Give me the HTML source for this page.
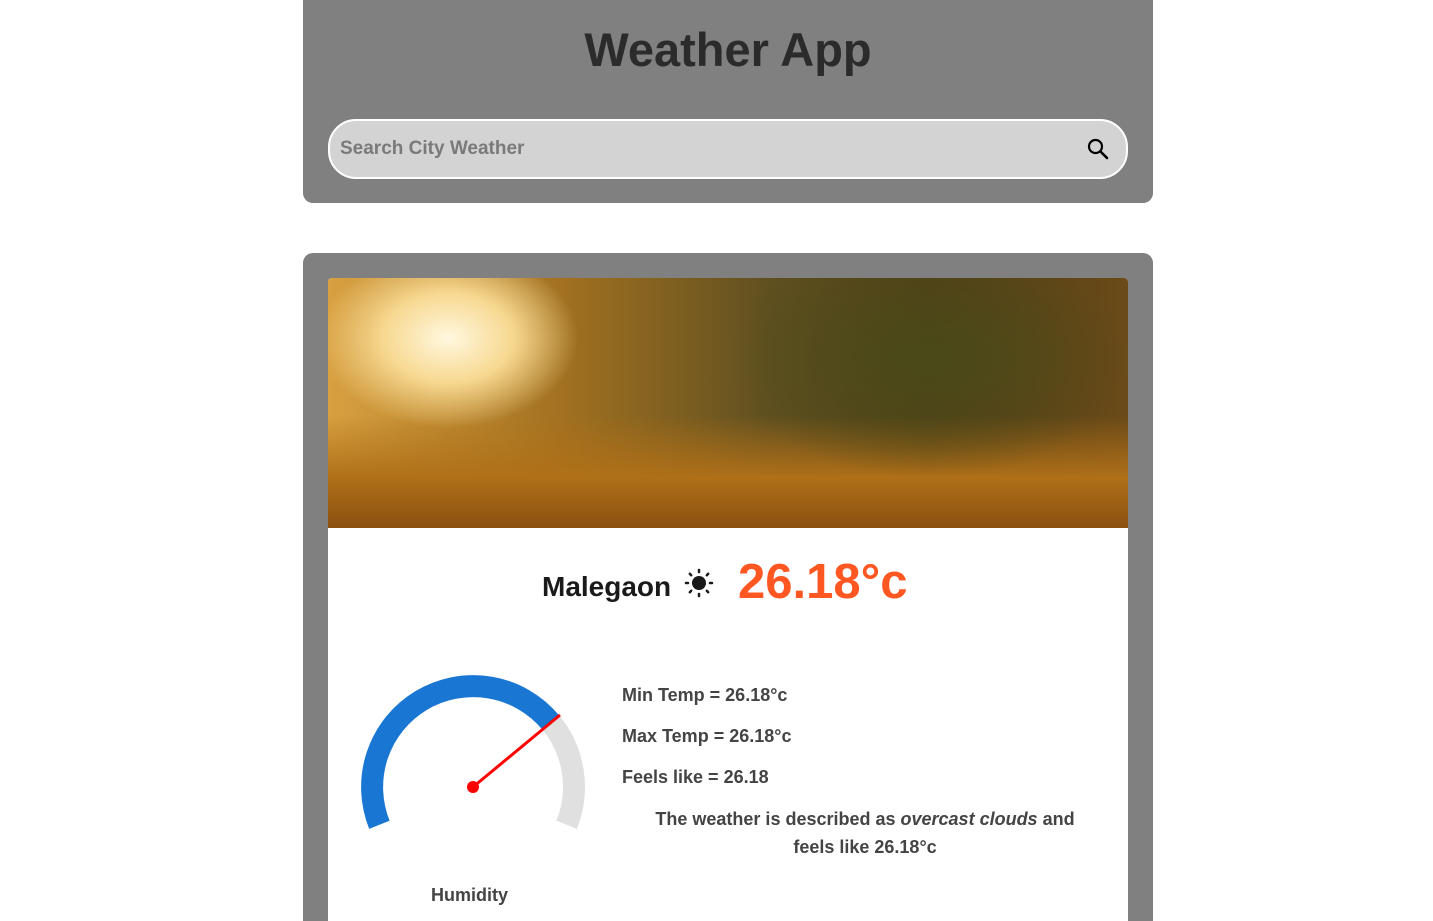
<!DOCTYPE html>
<html style="height:921px;overflow:hidden"><head><style>
body{margin:0;background:#fff;font-family:"Liberation Sans",sans-serif;width:1433px;height:921px;overflow:hidden;position:relative}
.top{position:absolute;left:303px;top:0;width:850px;height:203px;background:#808080;border-radius:0 0 10px 10px}
h1{margin:0;position:absolute;top:22px;width:100%;text-align:center;font-size:47px;font-weight:bold;color:#2b2b2b}
.search{position:absolute;left:25px;top:119px;width:796px;height:56px;background:#d3d3d3;border:2px solid #fff;border-radius:28px}
.search span{position:absolute;left:10px;top:17px;font-size:19px;font-weight:bold;color:#7a7a7a}
.card{position:absolute;left:303px;top:253px;width:850px;height:668px;background:#808080;border-radius:10px 10px 0 0;overflow:hidden}
.inner{position:absolute;left:25px;top:25px;width:800px;height:680px;background:#fff;border-radius:4px;overflow:hidden}
.img{position:absolute;left:0;top:0;width:800px;height:250px;background:
radial-gradient(ellipse 130px 90px at 120px 60px,#fff8e0 0%,#f7d890 50%,rgba(240,190,90,0) 100%),
radial-gradient(ellipse 200px 120px at 600px 80px,#4a4a18 0%,rgba(60,60,20,0) 100%),
linear-gradient(180deg,rgba(0,0,0,0) 55%,#b07018 80%,#8a5010 100%),
linear-gradient(90deg,#d8a040 0%,#a07020 30%,#605020 55%,#504018 75%,#6a4a18 100%)}
.t{position:absolute;color:#444;font-weight:bold;font-size:18px}
</style></head><body>
<div class="top"><h1>Weather App</h1>
<div class="search"><span>Search City Weather</span>
<svg style="position:absolute;left:756px;top:16px" width="24" height="24" viewBox="0 0 24 24"><circle cx="9.5" cy="9.5" r="6.5" fill="none" stroke="#000" stroke-width="2.2"/><path d="M14.5 14.5L21 21" stroke="#000" stroke-width="2.6" stroke-linecap="round"/></svg></div></div>
<div class="card"><div class="inner"><div class="img"></div></div></div>
<div style="position:absolute;left:542px;top:571px;font-size:28px;font-weight:bold;color:#1a1a1a">Malegaon</div>
<svg style="position:absolute;left:684px;top:568px" width="30" height="30" viewBox="0 0 30 30"><circle cx="15" cy="15" r="7" fill="#1a1a1a"/><g stroke="#1a1a1a" stroke-width="2.5" stroke-linecap="round"><path d="M15 2v2M15 26v2M2 15h2M26 15h2M5.8 5.8l1.4 1.4M22.8 22.8l1.4 1.4M5.8 24.2l1.4-1.4M22.8 7.2l1.4-1.4"/></g></svg>
<div style="position:absolute;left:738px;top:554px;font-size:49px;font-weight:bold;color:#ff5722">26.18°c</div>
<svg style="position:absolute;left:0;top:0" width="1433" height="921">
<path d="M379.4 824.8 A101 101 0 0 1 550.4 722.1" fill="none" stroke="#1976d2" stroke-width="22"/>
<path d="M550.4 722.1 A101 101 0 0 1 566.6 824.8" fill="none" stroke="#e0e0e0" stroke-width="22"/>
<line x1="473" y1="787" x2="560" y2="715" stroke="red" stroke-width="3"/>
<circle cx="473" cy="787" r="6" fill="red"/>
</svg>
<div class="t" style="left:622px;top:685px">Min Temp = 26.18°c</div>
<div class="t" style="left:622px;top:726px">Max Temp = 26.18°c</div>
<div class="t" style="left:622px;top:767px">Feels like = 26.18</div>
<div class="t" style="left:602px;top:805px;width:526px;text-align:center;line-height:28px;white-space:nowrap">The weather is described as <i>overcast clouds</i> and<br>feels like 26.18°c</div>
<div class="t" style="left:431px;top:885px">Humidity</div>
</body></html>
